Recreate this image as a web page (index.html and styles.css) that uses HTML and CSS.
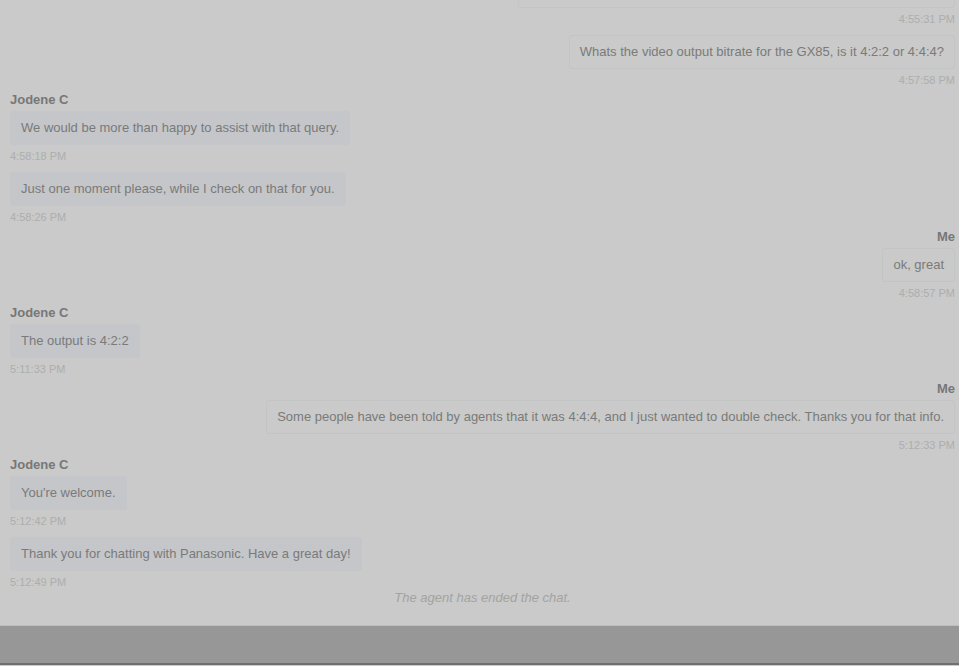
FILE: index.html
```html
<!DOCTYPE html>
<html>
  <head>
    <title>Chat transcript</title>
    <link rel="stylesheet" href="styles.css">
  </head>
  <body>
    <div class="chat">
      <div class="msg me">
        <div class="bubble">Hi, I have a question about one of the Lumix cameras I'm looking to buy.</div>
        <div class="time">4:55:31 PM</div>
      </div>
      <div class="msg me">
        <div class="bubble">Whats the video output bitrate for the GX85, is it 4:2:2 or 4:4:4?</div>
        <div class="time">4:57:58 PM</div>
      </div>

      <div class="name">Jodene C</div>
      <div class="msg agent">
        <div class="bubble">We would be more than happy to assist with that query.</div>
        <div class="time">4:58:18 PM</div>
      </div>
      <div class="msg agent">
        <div class="bubble">Just one moment please, while I check on that for you.</div>
        <div class="time">4:58:26 PM</div>
      </div>

      <div class="name me-name">Me</div>
      <div class="msg me">
        <div class="bubble">ok, great</div>
        <div class="time">4:58:57 PM</div>
      </div>

      <div class="name">Jodene C</div>
      <div class="msg agent">
        <div class="bubble">The output is 4:2:2</div>
        <div class="time">5:11:33 PM</div>
      </div>

      <div class="name me-name">Me</div>
      <div class="msg me">
        <div class="bubble">Some people have been told by agents that it was 4:4:4, and I just wanted to double check. Thanks you for that info.</div>
        <div class="time">5:12:33 PM</div>
      </div>

      <div class="name">Jodene C</div>
      <div class="msg agent">
        <div class="bubble">You're welcome.</div>
        <div class="time">5:12:42 PM</div>
      </div>
      <div class="msg agent">
        <div class="bubble">Thank you for chatting with Panasonic. Have a great day!</div>
        <div class="time">5:12:49 PM</div>
      </div>

      <p class="ended">The agent has ended the chat.</p>
    </div>
    <div class="footer"></div>
  </body>
</html>
```

FILE: styles.css
```css
body {
  margin: 0;
  background-color: #c9cac9;
  font-family: "Liberation Sans", Arial, sans-serif;
  font-size: 13px;
  color: #7a7a7a;
  height: 666px;
  overflow: hidden;
}

.chat {
  height: 625px;
  overflow: hidden;
  display: flex;
  flex-direction: column;
  justify-content: flex-end;
  padding: 0 4px 0 10px;
  box-sizing: border-box;
}

.name {
  font-size: 13px;
  font-weight: bold;
  line-height: 14px;
  color: #777777;
  margin-top: -3px;
  margin-bottom: 4px;
  flex-shrink: 0;
}

.me-name {
  text-align: right;
}

.msg {
  display: flex;
  flex-direction: column;
  margin-bottom: 9px;
  flex-shrink: 0;
}

.msg.me {
  align-items: flex-end;
}

.msg.agent {
  align-items: flex-start;
}

.bubble {
  padding: 9px 10px;
  line-height: 14px;
  border-radius: 3px;
  box-sizing: border-box;
}

.agent .bubble {
  background-color: #c4c6c9;
  border: 1px solid #c4c6c9;
}

.me .bubble {
  background-color: #c9cac9;
  border: 1px solid #c3c4c4;
}

.time {
  font-size: 11px;
  line-height: 14px;
  margin-top: 4px;
  color: #adaead;
}

.ended {
  margin: -7px 0 20px;
  text-align: center;
  font-style: italic;
  font-size: 13px;
  line-height: 14px;
  color: #a3a3a3;
  flex-shrink: 0;
}

.footer {
  height: 37px;
  background-color: #979797;
  border-top: 1px solid #bcbdbc;
  border-bottom: 2px solid #6f6f6f;
}
```
